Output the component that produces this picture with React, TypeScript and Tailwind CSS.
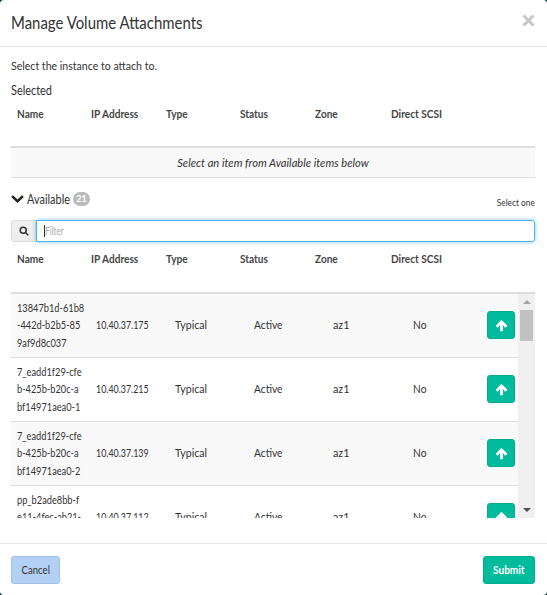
const font = { fontFamily: '"Lato", "Noto Sans", sans-serif' };

const cols = ["w-[73.5px]", "w-[75px]", "w-[74.5px]", "w-[75px]", "w-[76px]", "w-[82px]"];
const heads = ["Name", "IP Address", "Type", "Status", "Zone", "Direct SCSI"];

function HeadRow() {
  return (
    <div className="flex pl-[6px] text-[12px] leading-[17px] font-bold text-[#444]">
      {heads.map((h, i) => (
        <div key={h} className={cols[i]}>
          <div className="origin-left scale-x-[.84] whitespace-nowrap">{h}</div>
        </div>
      ))}
    </div>
  );
}

const rows = [
  { name: ["13847b1d-61b8", "-442d-b2b5-85", "9af9d8c037"], ip: "10.40.37.175", bg: "bg-[#f9f9f9]" },
  { name: ["7_eadd1f29-cfe", "b-425b-b20c-a", "bf14971aea0-1"], ip: "10.40.37.215", bg: "bg-white" },
  { name: ["7_eadd1f29-cfe", "b-425b-b20c-a", "bf14971aea0-2"], ip: "10.40.37.139", bg: "bg-[#f9f9f9]" },
  { name: ["pp_b2ade8bb-f", "e11-4fec-ab21-", "ab7f3e2c1d90"], ip: "10.40.37.112", bg: "bg-white" },
];

function Row({ r }: { r: (typeof rows)[number] }) {
  return (
    <div className={`flex items-center h-[64px] shrink-0 pb-[1px] border-b border-[#ddd] text-[12px] text-[#333] ${r.bg}`}>
      <div className="w-[80px] pl-[6px] leading-[17.2px] whitespace-nowrap">
        {r.name.map((n) => (
          <div key={n} className="origin-left scale-x-[.77]">{n}</div>
        ))}
      </div>
      <div className="w-[75px] pl-[5px]"><div className="origin-left scale-x-[.74] whitespace-nowrap">{r.ip}</div></div>
      <div className="w-[75px] pl-[9px]"><div className="origin-left scale-x-[.88]">Typical</div></div>
      <div className="w-[75px] pl-[13px]"><div className="origin-left scale-x-[.85]">Active</div></div>
      <div className="w-[75px] pl-[17px]"><div className="origin-left scale-x-[.9]">az1</div></div>
      <div className="w-[96px] pl-[22px]"><div className="origin-left scale-x-[.85]">No</div></div>
      <div className="w-[28px] h-[28px] shrink-0 rounded-[3px] bg-[#00bc9c] border border-[#00ab8e] flex items-center justify-center">
        <svg width="13" height="13" viewBox="0 0 12 12" fill="#fff">
          <path d="M6 .8 11.4 6.2 9.6 8 7.4 5.8V11.2H4.6V5.8L2.4 8 .6 6.2Z" />
        </svg>
      </div>
    </div>
  );
}

export default function App() {
  return (
    <div className="w-[547px] h-[595px] bg-[#0b3b3a] overflow-hidden" style={font}>
      <div className="w-full h-full bg-white rounded-[4px] flex flex-col">
        <div className="h-[47px] shrink-0 border-b border-[#e5e5e5] pl-[11px] pr-[12px] flex items-center justify-between">
          <div className="text-[18px] text-[#333] leading-[20px] -mt-[3px] origin-left scale-x-[.83] whitespace-nowrap">Manage Volume Attachments</div>
          <svg width="13" height="13" viewBox="0 0 13 13" fill="#c9c9c9" className="-mt-[6px]">
            <path d="M2.6.4 6.5 4.3 10.4.4 12.6 2.6 8.7 6.5 12.6 10.4 10.4 12.6 6.5 8.7 2.6 12.6.4 10.4 4.3 6.5.4 2.6Z" />
          </svg>
        </div>

        <div className="flex-1 min-h-0 pl-[11px] pr-[12px] flex flex-col">
          <div className="mt-[10px] text-[12px] leading-[17px] text-[#333] origin-left scale-x-[.88]">Select the instance to attach to.</div>
          <div className="mt-[6px] text-[14px] leading-[20px] text-[#333] origin-left scale-x-[.78]">Selected</div>
          <div className="mt-[5px]"><HeadRow /></div>
          <div className="mt-[24px] h-[32px] border-t-2 border-b border-t-[#ddd] border-b-[#ddd] bg-[#f9f9f9] flex items-center justify-center text-[12px] italic text-[#333]">
            <div className="scale-x-[.93] whitespace-nowrap">Select an item from Available items below</div>
          </div>

          <div className="mt-[12px] flex items-center justify-between h-[18px]">
            <div className="flex items-center">
              <svg width="13" height="10" viewBox="0 0 13 10" fill="#222">
                <path d="M2 1.2 6.5 5.5 11 1.2 12.8 3 6.5 9 .2 3Z" />
              </svg>
              <span className="ml-[3px] w-[43px] text-[14px] text-[#333] leading-[18px] inline-block origin-left scale-x-[.78] whitespace-nowrap">Available</span>
              <span className="ml-[3px] h-[14px] w-[17px] rounded-full bg-[#bbb] text-white text-[9px] font-bold flex items-center justify-center">21</span>
            </div>
            <span className="text-[10px] text-[#333] mt-[7px] origin-right scale-x-[.83] whitespace-nowrap">Select one</span>
          </div>

          <div className="mt-[12px] flex h-[22px]">
            <div className="w-[25px] shrink-0 bg-[#eee] border border-[#ddd] rounded-l-[3px] flex items-center justify-center">
              <svg width="10" height="10" viewBox="0 0 10 10" fill="none" stroke="#333" strokeWidth="1.5">
                <circle cx="4.2" cy="4.2" r="3" />
                <path d="M6.5 6.5 9.2 9.2" />
              </svg>
            </div>
            <div className="flex-1 border border-[#4fb3ea] rounded-r-[3px] shadow-[0_0_4px_rgba(80,180,240,0.7)] flex items-center pl-[7px]">
              <div className="w-px h-[12px] bg-[#333]" />
              <span className="text-[11px] text-[#aaa] origin-left scale-x-[.75]">Filter</span>
            </div>
          </div>

          <div className="mt-[8px]"><HeadRow /></div>

          <div className="mt-[25px] h-[226px] border-t-2 border-[#ddd] overflow-hidden">
            <div className="flex h-full">
              <div className="flex-1 min-w-0 flex flex-col">
                {rows.map((r) => (
                  <Row key={r.ip} r={r} />
                ))}
              </div>
              <div className="w-[17px] shrink-0 bg-[#f0f0f0] flex flex-col items-center">
                <div className="h-[16px] flex items-center justify-center">
                  <div className="w-0 h-0 border-x-[4px] border-x-transparent border-b-[4px] border-b-[#a3a3a3]" />
                </div>
                <div className="w-[13px] h-[31px] bg-[#c1c1c1]" />
                <div className="flex-1" />
                <div className="h-[16px] flex items-center justify-center">
                  <div className="w-0 h-0 border-x-[4px] border-x-transparent border-t-[4px] border-t-[#505050]" />
                </div>
              </div>
            </div>
          </div>
        </div>

        <div className="h-[52px] shrink-0 border-t border-[#e5e5e5] pl-[11px] pr-[12px] flex items-center justify-between">
          <button className="w-[49px] h-[28px] rounded-[3px] bg-[#b3d1f5] border border-[#9dc0e8] text-[12px] text-[#333]"><span className="inline-block scale-x-[.8]">Cancel</span></button>
          <button className="w-[52px] h-[28px] rounded-[3px] bg-[#00bc9c] border border-[#00ab8e] text-[12px] font-bold text-white"><span className="inline-block scale-x-[.84]">Submit</span></button>
        </div>
      </div>
    </div>
  );
}
